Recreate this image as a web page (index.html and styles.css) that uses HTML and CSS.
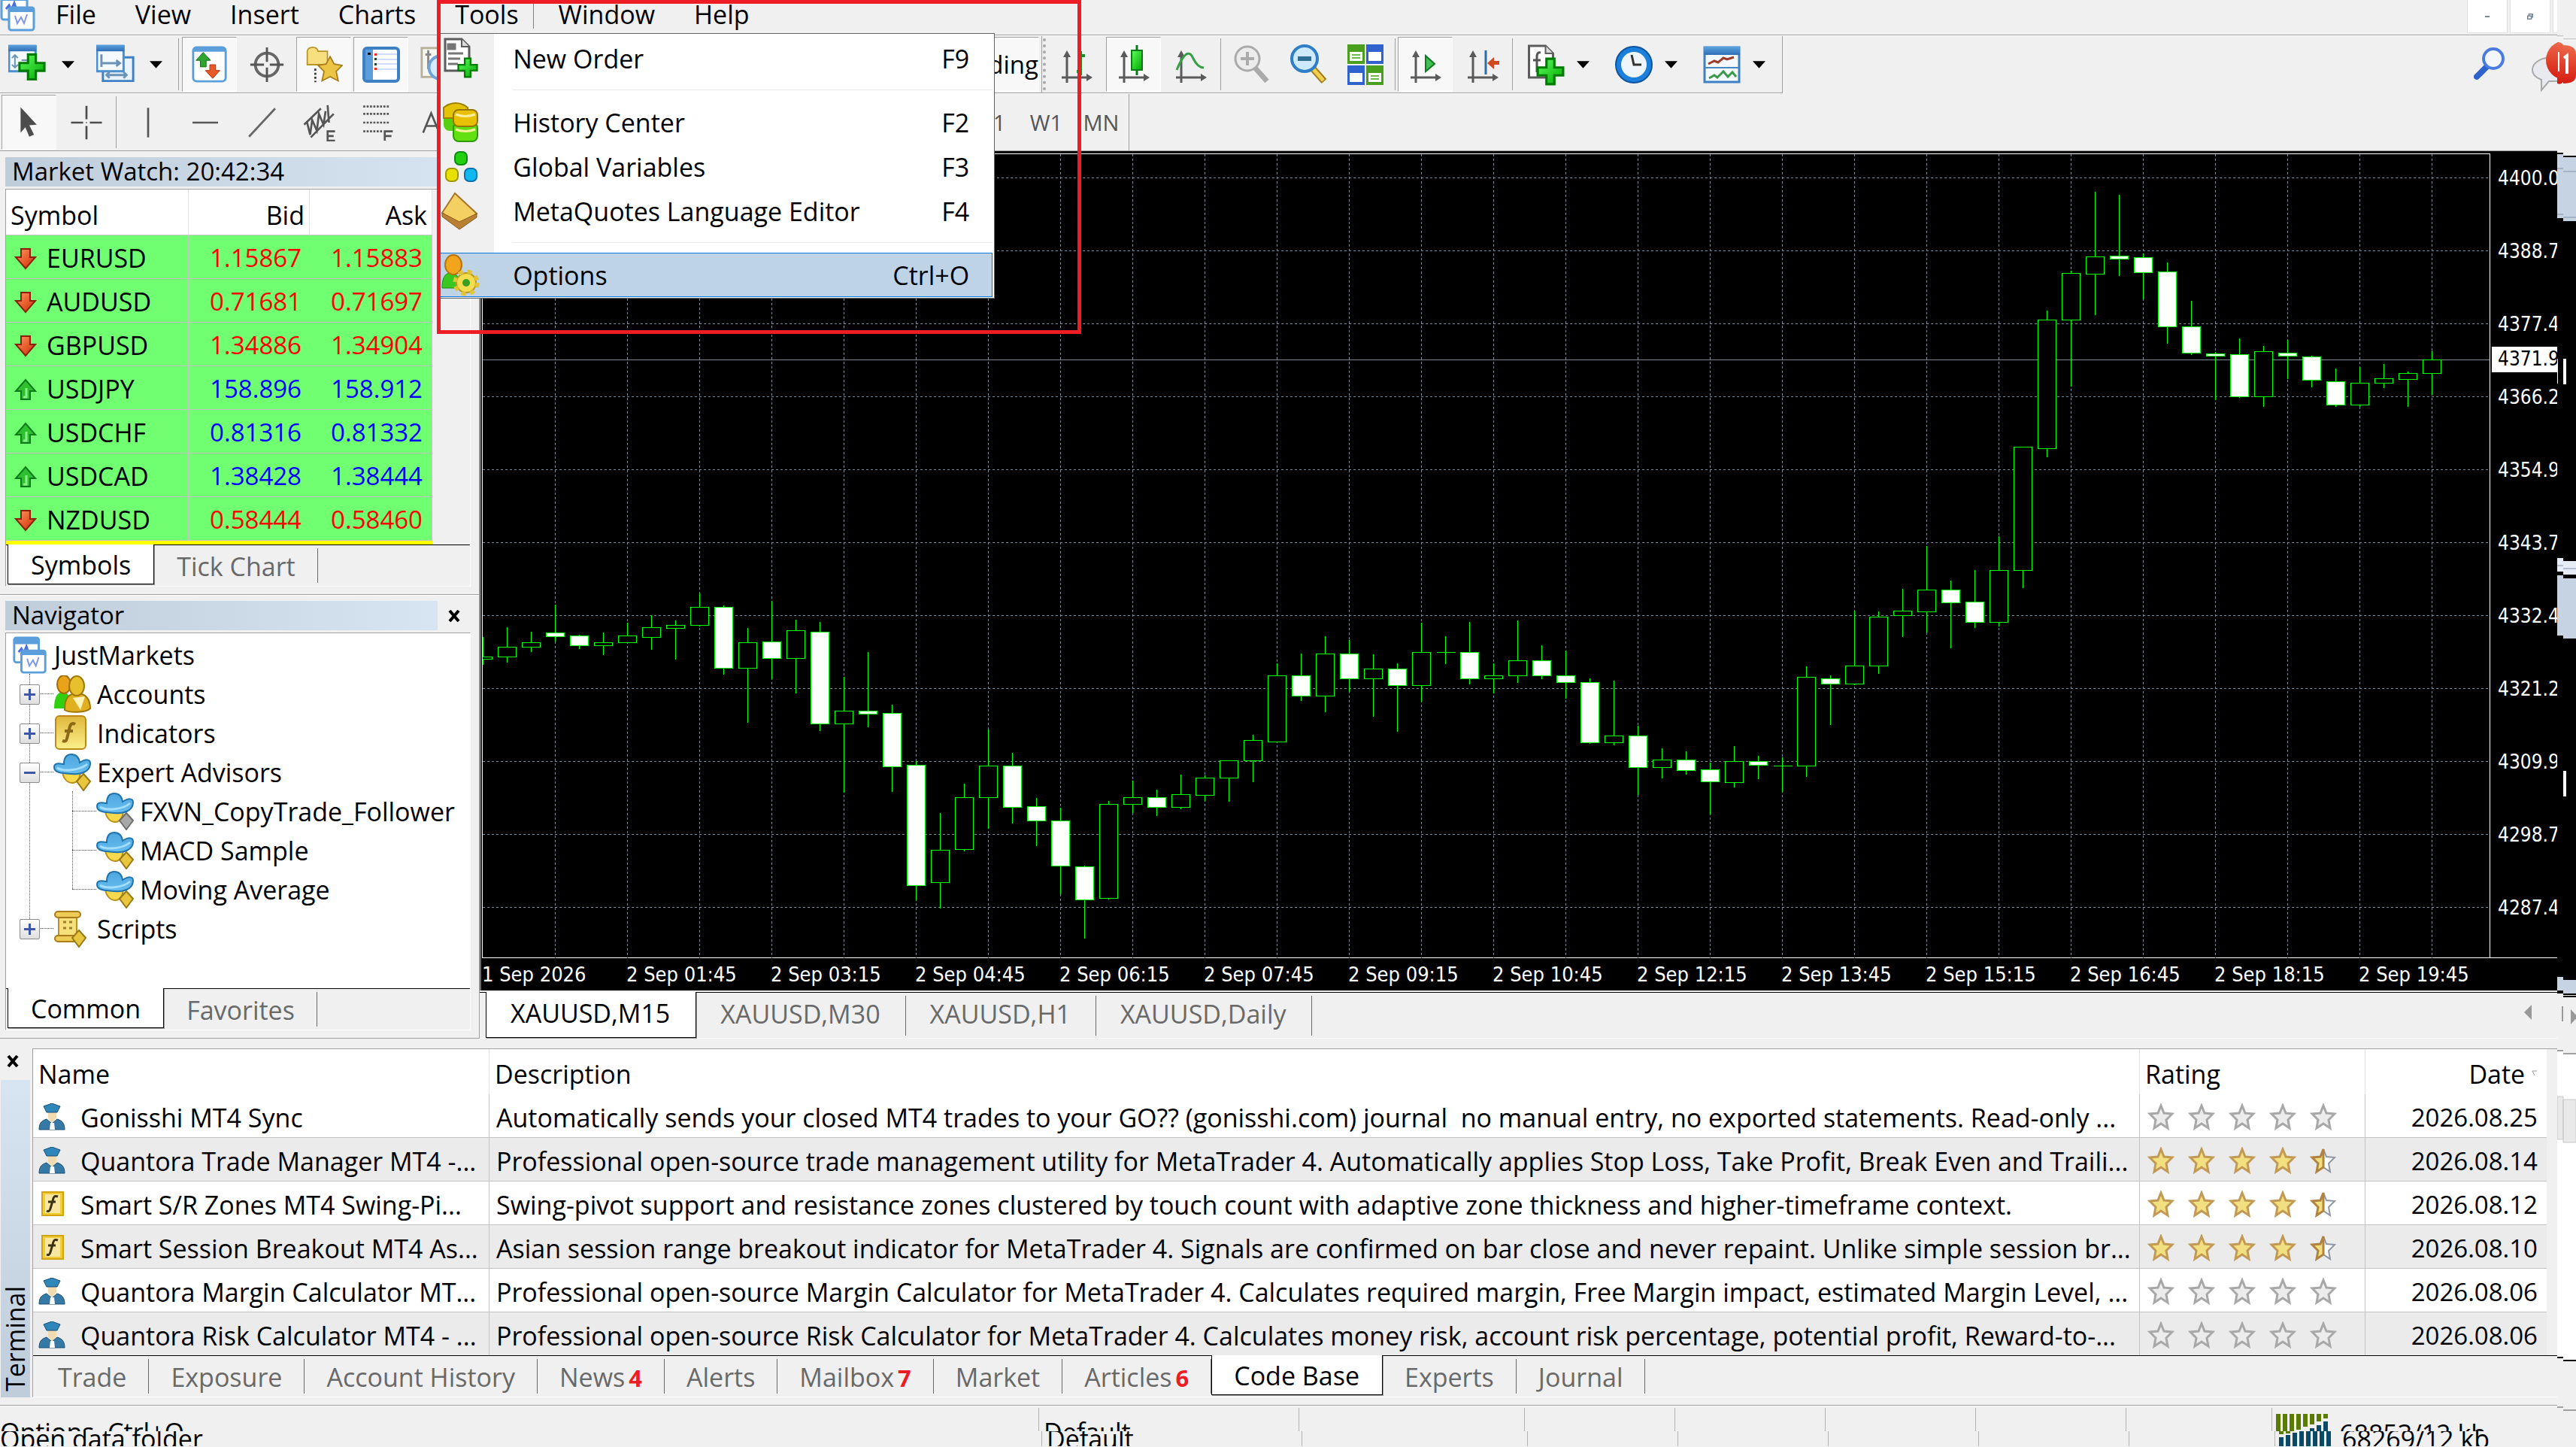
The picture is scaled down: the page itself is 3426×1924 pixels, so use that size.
FILE: index.html
```html
<!DOCTYPE html>
<html lang="en">
<head>
<meta charset="utf-8">
<title>JustMarkets - XAUUSD,M15</title>
<link rel="stylesheet" href="styles.css">
</head>
<body>
<svg class="defs" aria-hidden="true">
  <defs>
    <linearGradient id="gBlue" x2="0" y2="1"><stop offset="0" stop-color="#5ba3e0"/><stop offset="1" stop-color="#2f6fb5"/></linearGradient>
    <linearGradient id="gGreen" x2="1" y2="1"><stop offset="0" stop-color="#5dff5d"/><stop offset="1" stop-color="#00a800"/></linearGradient>
    <linearGradient id="gGold" x2="0" y2="1"><stop offset="0" stop-color="#e0b63a"/><stop offset="1" stop-color="#fbf08c"/></linearGradient>
    <linearGradient id="gRed" x2="1" y2="1"><stop offset="0" stop-color="#ff9a60"/><stop offset="1" stop-color="#d02800"/></linearGradient>
    <linearGradient id="gBadge" x2="0" y2="1"><stop offset="0" stop-color="#ee6a4c"/><stop offset="1" stop-color="#d41c10"/></linearGradient>
    <linearGradient id="gHat" x2="0" y2="1"><stop offset="0" stop-color="#4fa6de"/><stop offset="1" stop-color="#66bdf0"/></linearGradient>
    <symbol id="i-axes" viewBox="0 0 42 44"><path d="M8 44V8M1 37H38" stroke="#5a5a5a" stroke-width="3"/><path d="M3 10l5-9 5 9zM34 32l8 5-8 5z" fill="#5a5a5a"/></symbol>
    <symbol id="i-down" viewBox="0 0 32 32"><path d="M10 3h12v11h7L16 29 3 14h7z" fill="url(#gRed)" stroke="#8a2000" stroke-width="2"/></symbol>
    <symbol id="i-up" viewBox="0 0 32 32"><path d="M10 29h12V18h7L16 3 3 18h7z" fill="#2fc02f" stroke="#0b7a1b" stroke-width="2"/><path d="M13 26h4V14" fill="none" stroke="#8af08a" stroke-width="3"/></symbol>
    <symbol id="i-mt" viewBox="0 0 48 52"><rect x="2" y="2" width="34" height="34" rx="3" fill="#fff" stroke="#5a9edb" stroke-width="3"/><path d="M1 3h36v8H1z" fill="#5a9edb"/><path d="M8 22l4-5 3 6 4-9 3 9 4-3" fill="none" stroke="#4a6fe0" stroke-width="3"/><rect x="12" y="20" width="33" height="30" rx="3" fill="#fff" stroke="#5a9edb" stroke-width="3"/><path d="M11 20h35v6H11z" fill="#5a9edb"/><path d="M20 31l3 10 5-8 4 8 4-12" fill="none" stroke="#7f96ea" stroke-width="2"/></symbol>
    <symbol id="i-people" viewBox="0 0 50 50"><path d="M1 44c0-18 6-22 12-22s10 6 10 22z" fill="#30d010"/><ellipse cx="14" cy="12" rx="9" ry="12" fill="#e8a31a" stroke="#a06a00" stroke-width="2"/><path d="M15 46c0-17 6-22 17-22s17 8 17 20c-6 6-28 6-34 2z" fill="#e0b020" stroke="#a07400" stroke-width="2"/><ellipse cx="31" cy="14" rx="10" ry="13" fill="#e6c12c" stroke="#a07800" stroke-width="2"/><path d="M26 30l10 16 6-18z" fill="#fff3b8"/></symbol>
    <symbol id="i-fx" viewBox="0 0 50 50"><rect x="3" y="2" width="40" height="44" rx="5" fill="url(#gGold)" stroke="#b98a18" stroke-width="2"/><path d="M29 13c-5-3-7 1-8 7l-3 12c-1 4-3 4-6 3M15 22h11" fill="none" stroke="#8a6a1a" stroke-width="4"/></symbol>
    <symbol id="i-hat" viewBox="0 0 50 50"><path d="M12 22c0 10 6 17 13 17s11-7 11-16z" fill="#f6d94c" stroke="#b98f1a" stroke-width="2"/><path d="M14 14C14 5 18 1 24 1s10 4 11 11c8-5 14-5 14 1 0 11-12 15-25 14C9 26 1 25 1 18c0-6 6-5 13-4z" fill="url(#gHat)" stroke="#1f74ac" stroke-width="2"/><path d="M5 19c8 5 30 4 40-5" fill="none" stroke="#a5defc" stroke-width="3"/></symbol>
    <symbol id="i-tag" viewBox="0 0 20 24"><path d="M10 1l9 10-9 12L1 11z" fill="#e8c63e" stroke="#9a7a14" stroke-width="2"/></symbol>
    <symbol id="i-tagoff" viewBox="0 0 20 24"><path d="M10 1l9 10-9 12L1 11z" fill="#a8a8a8" stroke="#6e6e6e" stroke-width="2"/></symbol>
    <symbol id="i-scroll" viewBox="0 0 50 50"><path d="M7 8h24v32H7z" fill="#f6e07a" stroke="#b98f2a" stroke-width="2"/><rect x="2" y="2" width="34" height="8" rx="4" fill="#efcc58" stroke="#a87c1a" stroke-width="2"/><rect x="2" y="34" width="34" height="8" rx="4" fill="#efcc58" stroke="#a87c1a" stroke-width="2"/><path d="M13 16h4m4 0h4m-12 8h4m4 0h4" stroke="#a08030" stroke-width="3"/></symbol>
    <symbol id="i-ea" viewBox="0 0 36 36"><path d="M1 35c0-8 3-12 10-14l7 6 7-6c7 2 10 6 10 14z" fill="#3579a5" stroke="#1c4f74" stroke-width="1"/><path d="M13 10h11v10l-6 6-5-6z" fill="#f0dcb0"/><path d="M7 4l11-4 11 4-4 8H11z" fill="#2f86b8" stroke="#174f78"/><path d="M16 26h5l1 9h-7z" fill="#fff"/></symbol>
    <symbol id="i-fxs" viewBox="0 0 36 36"><rect x="5" y="2" width="28" height="31" fill="#f2cb35" stroke="#d1a412" stroke-width="2"/><path d="M9 5h20v25H9z" fill="#f8e7a0"/><path d="M26 8c-5-2-6 1-7 6l-3 10c-1 4-3 4-5 3M13 15h10" fill="none" stroke="#3a3210" stroke-width="3"/></symbol>
    <symbol id="i-star0" viewBox="0 0 36 36"><path d="M18 3l4 10 11 1-8 8 2 11-9-6-9 6 2-11-8-8 11-1z" fill="#ececec" stroke="#a8a8a8" stroke-width="3"/></symbol>
    <symbol id="i-star1" viewBox="0 0 36 36"><path d="M18 3l4 10 11 1-8 8 2 11-9-6-9 6 2-11-8-8 11-1z" fill="#f2e080" stroke="#c29a55" stroke-width="3"/></symbol>
    <symbol id="i-starh" viewBox="0 0 36 36"><path d="M18 3l4 10 11 1-8 8 2 11-9-6z" fill="#fff" stroke="#8d97a3" stroke-width="2"/><path d="M18 3v24l-9 6 2-11-8-8 11-1z" fill="#f2e080" stroke="#b08440" stroke-width="3"/></symbol>
    <symbol id="i-plus" viewBox="0 0 36 36"><path d="M13 2h10v11h11v10H23v11H13V23H2V13h11z" fill="url(#gGreen)" stroke="#007a00" stroke-width="3"/></symbol>
    <symbol id="i-caret" viewBox="0 0 18 10"><path d="M0 0h18L9 10z"/></symbol>
    <symbol id="i-page" viewBox="0 0 36 46"><path d="M2 2h22l10 10v32H2z" fill="#fff" stroke="#5c5c5c" stroke-width="3"/><path d="M24 2v10h10" fill="#ddd" stroke="#5c5c5c" stroke-width="2"/></symbol>
    <symbol id="i-x" viewBox="0 0 16 16"><path d="M2 1l12 14M14 1L2 15" stroke="#000" stroke-width="4"/></symbol>
  </defs>
</svg>

<div class="app">
  <nav class="menubar" aria-label="Main menu">
    <svg class="applogo" viewBox="0 10 48 42" aria-hidden="true"><use href="#i-mt" width="48" height="52"/></svg>
    <button>File</button><button>View</button><button>Insert</button><button>Charts</button>
    <div class="dropwrap">
      <button class="open" aria-expanded="true">Tools</button>
      <div class="drop" role="menu">
        <button role="menuitem"><svg viewBox="0 0 52 56"><use href="#i-page" x="3" width="36" height="46"/><path d="M9 9h9v6H9zM9 21h20M9 28h16M9 35h13" stroke="#777" stroke-width="3" fill="#777"/><use href="#i-plus" x="21" y="26" width="28" height="28"/></svg><span>New Order</span><kbd>F9</kbd></button>
        <hr>
        <button role="menuitem"><svg viewBox="0 0 52 56"><rect x="3" y="3" width="32" height="36" rx="8" fill="#55d010"/><path d="M3 8q16-12 32 0v14H3z" fill="#e4c400" stroke="#a08000" stroke-width="2"/><rect x="16" y="28" width="32" height="25" rx="7" fill="#62e012" stroke="#2e9a08" stroke-width="2"/><rect x="16" y="11" width="32" height="22" rx="7" fill="#e8c000" stroke="#987400" stroke-width="2"/><path d="M19 17q13 5 26 0M19 37q13 5 26 0" stroke="#fbf0a0" stroke-width="3" fill="none"/></svg><span>History Center</span><kbd>F2</kbd></button>
        <button role="menuitem"><svg viewBox="0 0 52 56"><rect x="18" y="8" width="16" height="17" rx="6" fill="#22d010" stroke="#0a8a10" stroke-width="2"/><rect x="6" y="30" width="16" height="17" rx="6" fill="#e8e000" stroke="#a09800" stroke-width="2"/><rect x="31" y="30" width="16" height="17" rx="6" fill="#10b8f0" stroke="#0a70b0" stroke-width="2"/></svg><span>Global Variables</span><kbd>F3</kbd></button>
        <button role="menuitem"><svg viewBox="0 0 52 56"><path d="M18 4l29 27-23 17L1 30z" fill="#f4cf62" stroke="#a8742a" stroke-width="2"/><path d="M1 30l23 12 23-11v5L24 52 1 35z" fill="#b98034" stroke="#8a5a20"/></svg><span>MetaQuotes Language Editor</span><kbd>F4</kbd></button>
        <hr>
        <button role="menuitem" class="hot"><svg viewBox="0 0 52 56"><path d="M1 45c0-16 5-20 12-20s12 6 12 20z" fill="#38c820" stroke="#1c8a10"/><ellipse cx="16" cy="14" rx="11" ry="13" fill="#f2a41c" stroke="#b47408" stroke-width="2"/><circle cx="33" cy="38" r="13" fill="#f2dc50" stroke="#b89a1c" stroke-width="2"/><circle cx="33" cy="38" r="15" fill="none" stroke="#e2c436" stroke-width="5" stroke-dasharray="6 6"/><circle cx="33" cy="38" r="5" fill="#38a020"/></svg><span>Options</span><kbd>Ctrl+O</kbd></button>
      </div>
      <div class="callout"></div>
    </div>
    <button>Window</button><button>Help</button>
    <div class="winbtns"><button aria-label="Minimize"><svg viewBox="0 0 8 4"><path d="M1 1h6v2H1z" fill="#778899"/></svg></button><button aria-label="Restore"><svg viewBox="0 0 10 10"><path d="M3 3V1h6v5H7M1 4h6v5H1z" fill="none" stroke="#778899" stroke-width="2"/></svg></button><button aria-label="Close"></button></div>
  </nav>

  <div class="toolbar">
    <div class="group g1">
      <button class="wide" aria-label="New chart"><svg viewBox="0 0 58 56"><path d="M1 3h36v34H1z" fill="#f4faff" stroke="#4a8fd0" stroke-width="3"/><path d="M0 1h38v9H0z" fill="url(#gBlue)"/><path d="M9 16v15M5 19l4-4 4 4M5 28l4 4 4-4M18 22h10" stroke="#6b93b8" stroke-width="2" fill="none"/><use href="#i-plus" x="13" y="12" width="38" height="38"/></svg><svg class="caret"><use href="#i-caret"/></svg></button>
      <button class="wide" aria-label="Profiles"><svg viewBox="0 0 58 56"><path d="M9 18h41v32H9z" fill="#e8f3fd" stroke="#3f80c4" stroke-width="3"/><path d="M1 3h36v34H1z" fill="#f4faff" stroke="#4a8fd0" stroke-width="3"/><path d="M0 1h38v9H0z" fill="url(#gBlue)"/><path d="M7 14v17M7 26h24M27 22l5 4-5 4M14 42h26M18 38l-4 4 4 4M37 38l4 4-4 4" stroke="#6b93b8" stroke-width="3" fill="none"/></svg><svg class="caret"><use href="#i-caret"/></svg></button>
      <i class="sep"></i>
      <button class="on" aria-label="Market Watch"><svg viewBox="0 0 50 52"><rect x="2" y="2" width="45" height="47" rx="5" fill="#fff" stroke="#5a9edb" stroke-width="3"/><path d="M1 8q0-7 6-7h35q6 0 6 7z" fill="#5a9edb"/><path d="M16 9l10 11h-6v9h-8v-9H6z" fill="#2ea32e" stroke="#11701a"/><path d="M29 45l10-11h-6v-8h-8v8h-6z" fill="#e8592a" stroke="#b03410"/></svg></button>
      <button aria-label="Data Window"><svg viewBox="0 0 50 52"><circle cx="25" cy="26" r="16" fill="none" stroke="#666" stroke-width="4"/><path d="M25 2v20M25 30v20M2 26h19M29 26h19" stroke="#555" stroke-width="3"/></svg></button>
      <button class="on" aria-label="Navigator"><svg viewBox="0 0 54 56"><path d="M2 8q1-6 8-6t8 6h14v20H2z" fill="#f7df80" stroke="#b8942a" stroke-width="2"/><path d="M14 34v20" stroke="#333" stroke-width="3" stroke-dasharray="3 3"/><path d="M36 16l6 11 12 2-9 9 3 14-12-6-12 6 3-14-9-9 12-2z" fill="#edc544" stroke="#a97d18" stroke-width="2"/></svg></button>
      <button class="on" aria-label="Terminal"><svg viewBox="0 0 50 50"><rect x="2" y="3" width="46" height="44" rx="4" fill="#fff" stroke="#3f80c4" stroke-width="4"/><path d="M4 5h10v40H4z" fill="#5c9ddb"/><path d="M18 11h28M18 18h28M18 24h28M18 31h28" stroke="#cfdcff" stroke-width="2"/><path d="M7 9h4v3H7z"/><path d="M16 10h3v3h-3zM16 29h3v3h-3z" fill="#f22"/><path d="M16 16h3v3h-3zM16 23h3v3h-3z" fill="#243"/></svg></button>
      <button aria-label="Strategy Tester"><svg viewBox="0 0 50 52"><rect x="2" y="3" width="40" height="40" fill="#f7f7f2" stroke="#b9b09c" stroke-width="3"/><path d="M11 6v26M7 12h8" stroke="#888" stroke-width="3"/><circle cx="28" cy="30" r="16" fill="#d6e9fa" stroke="#6ea2d8" stroke-width="4"/></svg></button>
      <button class="on auto">AutoTrading</button>
    </div>
    <div class="group g2">
      <i class="grip"></i>
      <button aria-label="Bar Chart"><svg viewBox="0 0 50 56"><use href="#i-axes" x="4" y="8" width="42" height="44"/><path d="M30 10v32M30 16h6M25 37h5" stroke="#1d8a2c" stroke-width="4"/></svg></button>
      <button class="on" aria-label="Candlesticks"><svg viewBox="0 0 50 56"><use href="#i-axes" x="4" y="8" width="42" height="44"/><path d="M29 2v40" stroke="#0a7a1a" stroke-width="3"/><rect x="22" y="9" width="14" height="26" fill="url(#gGreen)" stroke="#0a7a1a" stroke-width="2"/></svg></button>
      <button aria-label="Line Chart"><svg viewBox="0 0 50 56"><use href="#i-axes" x="4" y="8" width="42" height="44"/><path d="M6 35q14-34 22-15 6 12 14 12" fill="none" stroke="#35a045" stroke-width="3"/></svg></button>
      <i class="sep"></i>
      <button aria-label="Zoom In"><svg viewBox="0 0 50 56"><path d="M30 32l16 18" stroke="#aaa" stroke-width="7"/><circle cx="20" cy="20" r="16" fill="#ececec" stroke="#aaa" stroke-width="3"/><path d="M20 11v18M11 20h18" stroke="#aaa" stroke-width="4"/></svg></button>
      <button aria-label="Zoom Out"><svg viewBox="0 0 50 56"><path d="M30 32l16 18" stroke="#a07c10" stroke-width="9"/><path d="M30 32l15 17" stroke="#f0d050" stroke-width="5"/><circle cx="20" cy="20" r="17" fill="#cfeafc" stroke="#2f7fc8" stroke-width="4"/><path d="M11 20h18" stroke="#2f6c96" stroke-width="6"/></svg></button>
      <button aria-label="Tile Windows"><svg viewBox="0 0 50 56"><path d="M1 1h23v26H1zM26 29h23v26H26z" fill="#4aa01c"/><path d="M26 1h23v26H26zM1 29h23v26H1z" fill="#2f62cc"/><path d="M4 11h17v12H4zM29 11h17v12H29zM4 39h17v12H4zM29 39h17v12H29z" fill="#fff"/><path d="M7 15h11M7 19h11M32 43h11M32 47h11" stroke="#6cb848" stroke-width="2"/></svg></button>
      <i class="sep"></i>
      <button class="on" aria-label="Auto Scroll"><svg viewBox="0 0 50 56"><use href="#i-axes" x="4" y="8" width="42" height="44"/><path d="M25 16v21l12-10z" fill="#3fc052" stroke="#0f7a22" stroke-width="2"/></svg></button>
      <button aria-label="Chart Shift"><svg viewBox="0 0 50 56"><use href="#i-axes" x="4" y="8" width="42" height="44"/><path d="M29 9v32" stroke="#2a6f9e" stroke-width="3"/><path d="M31 26l9-8v5h7v5h-7v6z" fill="#d0481c"/></svg></button>
      <i class="sep"></i>
      <button class="drp" aria-label="Indicators"><svg viewBox="0 0 50 56"><use href="#i-page" x="0" y="1" width="37" height="46"/><path d="M18 12c-4-1-5 2-5 6v20M8 22h10" stroke="#555" stroke-width="3" fill="none"/><use href="#i-plus" x="12" y="18" width="38" height="38"/></svg><svg class="caret"><use href="#i-caret"/></svg></button>
      <button class="drp" aria-label="Periods"><svg viewBox="0 0 50 56"><circle cx="25" cy="28" r="24" fill="#1b7fdc" stroke="#0d559e" stroke-width="2"/><circle cx="25" cy="28" r="17" fill="#eef6fc"/><path d="M22 15l3 13h10" fill="none" stroke="#333" stroke-width="3"/></svg><svg class="caret"><use href="#i-caret"/></svg></button>
      <button class="drp" aria-label="Templates"><svg viewBox="0 0 50 56"><rect x="2" y="5" width="46" height="46" fill="#f4f9fd" stroke="#3f80c4" stroke-width="3"/><path d="M1 4h48v11H1z" fill="url(#gBlue)"/><path d="M2 32h46" stroke="#4a86bf" stroke-width="2"/><path d="M7 27l8-4 5 2 7-6 5 2 9-3" fill="none" stroke="#a03a2a" stroke-width="3"/><path d="M8 46l7-4 4 3 8-8 6 7 6-6 5 6" fill="none" stroke="#3a9a4a" stroke-width="3"/></svg><svg class="caret"><use href="#i-caret"/></svg></button>
    </div>
    <div class="tray">
      <button aria-label="Search"><svg viewBox="0 0 42 44"><path d="M4 39l14-14" stroke="#2f62cc" stroke-width="8" stroke-linecap="round"/><circle cx="26" cy="15" r="13" fill="#f3f6fc" stroke="#4a7be0" stroke-width="4"/></svg></button>
      <button class="chat" aria-label="Chat"><svg viewBox="0 0 60 76"><path d="M2 46c0-10 12-17 28-17s28 7 28 17-14 16-34 15l-10 12V59C6 56 2 52 2 46z" fill="#e9e9f0" stroke="#a8a8a8" stroke-width="2"/><circle cx="46" cy="33" r="26" fill="url(#gBadge)"/></svg></button>
    </div>
  </div>

  <div class="toolbar tb2">
    <div class="group g3">
      <button class="on" aria-label="Cursor"><svg viewBox="0 0 50 56"><path d="M12 5l24 26-11 1 7 14-7 3-6-14-7 8z" fill="#4c4c4c"/></svg></button>
      <button aria-label="Crosshair"><svg viewBox="0 0 50 56"><path d="M25 3v20M25 33v20M2 28h18M30 28h18" stroke="#4c4c4c" stroke-width="3"/><path d="M24 27h2v2h-2z" fill="#888"/></svg></button>
      <i class="sep"></i>
      <button class="draw" aria-label="Vertical Line"><svg viewBox="0 0 50 56"><path d="M25 6v44" stroke="#555" stroke-width="3"/></svg></button>
      <button class="draw" aria-label="Horizontal Line"><svg viewBox="0 0 50 56"><path d="M6 28h38" stroke="#555" stroke-width="3"/></svg></button>
      <button class="draw" aria-label="Trendline"><svg viewBox="0 0 50 56"><path d="M5 49L44 7" stroke="#666" stroke-width="3"/></svg></button>
      <button class="draw" aria-label="Equidistant Channel"><svg viewBox="0 0 50 56"><path d="M2 31L27 7M12 50L46 15M6 26l5 20 3-22 7 16 3-25 7 16 3-20M37 2l2 26" stroke="#555" stroke-width="3" fill="none"/><path d="M48 41H37v14h11M37 48h9" stroke="#555" stroke-width="3" fill="none"/></svg></button>
      <button class="draw" aria-label="Fibonacci Retracement"><svg viewBox="0 0 50 56"><path d="M5 4h40M5 15h40M5 28h40M5 41h28" stroke="#555" stroke-width="3" stroke-dasharray="3 2"/><path d="M49 41H37v14M37 48h10" stroke="#555" stroke-width="3" fill="none"/></svg></button>
      <button class="draw" aria-label="Text"><svg viewBox="0 0 50 56"><path d="M9 43L21 14l12 29M14 33h14" stroke="#555" stroke-width="3" fill="none"/></svg></button>
      <span class="fill"></span>
      <button class="tf">D1</button><button class="tf">W1</button><button class="tf">MN</button>
    </div>
  </div>

  <div class="workspace">
    <div class="side">
      <section class="panel" aria-label="Market Watch">
        <header class="title"><h2>Market Watch: 20:42:34</h2></header>
        <div class="box">
          <table class="quotes">
            <thead><tr><th>Symbol</th><th>Bid</th><th>Ask</th></tr></thead>
            <tbody>
              <tr><td><svg><use href="#i-down"/></svg>EURUSD</td><td>1.15867</td><td>1.15883</td></tr>
              <tr><td><svg><use href="#i-down"/></svg>AUDUSD</td><td>0.71681</td><td>0.71697</td></tr>
              <tr><td><svg><use href="#i-down"/></svg>GBPUSD</td><td>1.34886</td><td>1.34904</td></tr>
              <tr class="up"><td><svg><use href="#i-up"/></svg>USDJPY</td><td>158.896</td><td>158.912</td></tr>
              <tr class="up"><td><svg><use href="#i-up"/></svg>USDCHF</td><td>0.81316</td><td>0.81332</td></tr>
              <tr class="up"><td><svg><use href="#i-up"/></svg>USDCAD</td><td>1.38428</td><td>1.38444</td></tr>
              <tr><td><svg><use href="#i-down"/></svg>NZDUSD</td><td>0.58444</td><td>0.58460</td></tr>
            </tbody>
          </table>
          <div class="nextrow"></div>
          <div class="tabs"><button class="sel">Symbols</button><button>Tick Chart</button></div>
        </div>
      </section>
      <section class="panel" aria-label="Navigator">
        <header class="title"><h2>Navigator</h2><button class="close" aria-label="Close"><svg><use href="#i-x"/></svg></button></header>
        <div class="box">
          <div class="tree">
            <div class="node"><svg><use href="#i-mt"/></svg>JustMarkets</div>
            <ul>
              <li><div class="node"><button class="exp" aria-label="Expand"></button><svg><use href="#i-people"/></svg>Accounts</div></li>
              <li><div class="node"><button class="exp" aria-label="Expand"></button><svg><use href="#i-fx"/></svg>Indicators</div></li>
              <li><div class="node"><button class="exp less" aria-label="Collapse"></button><svg viewBox="0 0 50 50"><use href="#i-hat" width="50" height="50"/><use href="#i-tag" x="30" y="26" width="20" height="24"/></svg>Expert Advisors</div>
                <ul>
                  <li><div class="node"><svg viewBox="0 0 50 50"><use href="#i-hat" width="50" height="50"/><use href="#i-tagoff" x="30" y="26" width="20" height="24"/></svg>FXVN_CopyTrade_Follower</div></li>
                  <li><div class="node"><svg viewBox="0 0 50 50"><use href="#i-hat" width="50" height="50"/><use href="#i-tag" x="30" y="26" width="20" height="24"/></svg>MACD Sample</div></li>
                  <li><div class="node"><svg viewBox="0 0 50 50"><use href="#i-hat" width="50" height="50"/><use href="#i-tag" x="30" y="26" width="20" height="24"/></svg>Moving Average</div></li>
                </ul></li>
              <li><div class="node"><button class="exp" aria-label="Expand"></button><svg viewBox="0 0 50 50"><use href="#i-scroll" width="50" height="50"/><use href="#i-tag" x="24" y="26" width="20" height="24"/></svg>Scripts</div></li>
            </ul>
          </div>
          <div class="tabs"><button class="sel">Common</button><button>Favorites</button></div>
        </div>
      </section>
    </div>

    <main class="chart">
      <div class="frame">
        <div class="plotrow">
          <svg class="plot" id="plot" role="img" aria-label="XAUUSD M15 candlestick chart"></svg>
          <div class="prices">
            <span>4400.0</span><span>4388.7</span><span>4377.4</span><span>4366.2</span><span>4354.9</span><span>4343.7</span><span>4332.4</span><span>4321.2</span><span>4309.9</span><span>4298.7</span><span>4287.4</span>
            <b>4371.9</b>
          </div>
        </div>
        <div class="times">
          <span>1 Sep 2026</span><span>2 Sep 01:45</span><span>2 Sep 03:15</span><span>2 Sep 04:45</span><span>2 Sep 06:15</span><span>2 Sep 07:45</span><span>2 Sep 09:15</span><span>2 Sep 10:45</span><span>2 Sep 12:15</span><span>2 Sep 13:45</span><span>2 Sep 15:15</span><span>2 Sep 16:45</span><span>2 Sep 18:15</span><span>2 Sep 19:45</span>
        </div>
      </div>
      <div class="tabs"><button class="sel">XAUUSD,M15</button><button>XAUUSD,M30</button><button>XAUUSD,H1</button><button>XAUUSD,Daily</button><button class="scroll" aria-label="Scroll tabs left"><svg viewBox="0 0 10 20"><path d="M10 0v20L0 10z" fill="#999"/></svg></button></div>
    </main>
  </div>

  <section class="terminal" aria-label="Terminal">
    <div class="rail"><button class="close" aria-label="Close"><svg><use href="#i-x"/></svg></button><h2>Terminal</h2></div>
    <div class="box">
      <table class="codebase">
        <thead><tr><th>Name</th><th>Description</th><th>Rating</th><th>Date <svg viewBox="0 0 8 8"><path d="M1 1h6M1 1l3 6" stroke="#999" fill="none"/></svg></th></tr></thead>
        <tbody>
          <tr><td><svg><use href="#i-ea"/></svg>Gonisshi MT4 Sync</td><td>Automatically sends your closed MT4 trades to your GO?? (gonisshi.com) journal &nbsp;no manual entry, no exported statements. Read-only ...</td><td><svg><use href="#i-star0"/></svg><svg><use href="#i-star0"/></svg><svg><use href="#i-star0"/></svg><svg><use href="#i-star0"/></svg><svg><use href="#i-star0"/></svg></td><td>2026.08.25</td></tr>
          <tr><td><svg><use href="#i-ea"/></svg>Quantora Trade Manager MT4 -...</td><td>Professional open-source trade management utility for MetaTrader 4. Automatically applies Stop Loss, Take Profit, Break Even and Traili...</td><td><svg><use href="#i-star1"/></svg><svg><use href="#i-star1"/></svg><svg><use href="#i-star1"/></svg><svg><use href="#i-star1"/></svg><svg><use href="#i-starh"/></svg></td><td>2026.08.14</td></tr>
          <tr><td><svg><use href="#i-fxs"/></svg>Smart S/R Zones MT4 Swing-Pi...</td><td>Swing-pivot support and resistance zones clustered by touch count with adaptive zone thickness and higher-timeframe context.</td><td><svg><use href="#i-star1"/></svg><svg><use href="#i-star1"/></svg><svg><use href="#i-star1"/></svg><svg><use href="#i-star1"/></svg><svg><use href="#i-starh"/></svg></td><td>2026.08.12</td></tr>
          <tr><td><svg><use href="#i-fxs"/></svg>Smart Session Breakout MT4 As...</td><td>Asian session range breakout indicator for MetaTrader 4. Signals are confirmed on bar close and never repaint. Unlike simple session br...</td><td><svg><use href="#i-star1"/></svg><svg><use href="#i-star1"/></svg><svg><use href="#i-star1"/></svg><svg><use href="#i-star1"/></svg><svg><use href="#i-starh"/></svg></td><td>2026.08.10</td></tr>
          <tr><td><svg><use href="#i-ea"/></svg>Quantora Margin Calculator MT...</td><td>Professional open-source Margin Calculator for MetaTrader 4. Calculates required margin, Free Margin impact, estimated Margin Level, ...</td><td><svg><use href="#i-star0"/></svg><svg><use href="#i-star0"/></svg><svg><use href="#i-star0"/></svg><svg><use href="#i-star0"/></svg><svg><use href="#i-star0"/></svg></td><td>2026.08.06</td></tr>
          <tr><td><svg><use href="#i-ea"/></svg>Quantora Risk Calculator MT4 - ...</td><td>Professional open-source Risk Calculator for MetaTrader 4. Calculates money risk, account risk percentage, potential profit, Reward-to-...</td><td><svg><use href="#i-star0"/></svg><svg><use href="#i-star0"/></svg><svg><use href="#i-star0"/></svg><svg><use href="#i-star0"/></svg><svg><use href="#i-star0"/></svg></td><td>2026.08.06</td></tr>
        </tbody>
      </table>
      <div class="tabs"><button>Trade</button><button>Exposure</button><button>Account History</button><button>News<b>4</b></button><button>Alerts</button><button>Mailbox<b>7</b></button><button>Market</button><button>Articles<b>6</b></button><button class="sel">Code Base</button><button>Experts</button><button>Journal</button></div>
    </div>
  </section>

  <footer class="status">
    <div class="line first"><span>Options &nbsp;Ctrl+O</span><span>Default</span><span></span><span></span><span></span><span></span><span></span><span></span><span class="net"><svg viewBox="0 0 70 30"><path d="M3 0v26M12 0v26M21 0v23M30 0v21M39 0v17M48 0v14M57 0v10M66 0v6" stroke="#5a7a00" stroke-width="6"/><path d="M21 28v4M30 26v6M39 23v9M48 19v13M57 15v17M66 10v22" stroke="#0b4a66" stroke-width="6"/></svg>68853/12 kb</span></div>
    <div class="line second"><span>Open data folder</span><span>Default</span><span></span><span></span><span></span><span></span><span></span><span></span><span class="net"><svg viewBox="0 0 70 20"><path d="M3 0v4M12 0v3" stroke="#5a7a00" stroke-width="6"/><path d="M3 8v12M12 5v15M21 2v18M30 0v20M39 0v20M48 0v20M57 0v20M66 0v20" stroke="#0b4a66" stroke-width="6"/></svg>68269/12 kb</span></div>
  </footer>

  <svg class="edge" aria-hidden="true">
    <rect width="25" height="100%" fill="#f0f0f0"/>
    <path d="M0 48h8M8 52h17" stroke="#a0a0a0"/><path d="M0 49h8M8 53h17" stroke="#fff"/>
    <path d="M0 56q6 0 8 4v49q-3 4-8 2z" fill="url(#gBadge)"/>
    <path d="M8 60q17 0 17 12v28q0 11-17 11z" fill="url(#gBadge)"/>
    <path d="M2 69v26" stroke="#fff" stroke-width="2"/><path d="M13 98V74l-4 3" fill="none" stroke="#fff" stroke-width="4"/>
    <path d="M0 203h8v1116H0zM8 207h17v1116H8z" fill="#000"/>
    <path d="M0 205h8v85H0zM8 209h17v85H8zM0 765h8v80H0zM8 769h17v80H8zM0 1299h8v18H0zM8 1303h17v18H8z" fill="#c5d3e3"/>
    <path d="M0 742h8v18H0zM8 746h17v18H8z" fill="#e6edf6"/>
    <path d="M0 224h8M8 228h17M0 285h8M8 289h17M0 752h8M8 756h17" stroke="#8093ad" stroke-width="1"/>
    <path d="M0 477h1v33H0zM8 477h4v34H8zM8 1025h4v34H8z" fill="#fff"/>
    <path d="M0 1320h8M8 1325h17" stroke="#000" stroke-width="2"/>
    <path d="M7 1338v20" stroke="#999" stroke-width="2"/><path d="M18 1342v20l9-10z" fill="#999"/>
    <path d="M0 1398h8v408H0zM8 1402h17v408H8z" fill="#fff"/>
    <path d="M0 1458h8v57H0zM8 1462h17v57H8z" fill="#e9e9e9" stroke="#c8c8c8"/>
    <path d="M0 1805h8M8 1809h17" stroke="#000" stroke-width="2"/>
    <path d="M0 1397h8M8 1401h17M0 1871h8M8 1875h17" stroke="#a0a0a0" stroke-width="2"/>
  </svg>
</div>
<script src="chart.js"></script>
</body>
</html>
```

FILE: styles.css
```css
* { box-sizing: border-box; }

:root {
  --face: #f0f0f0;
  --line: #a0a0a0;
  --cell: #c4c4c4;
  --text: 34px;
  --num: 33px;
}

body {
  margin: 0;
  background: var(--face);
  color: #000;
  font: var(--text)/40px "Open Sans", "Noto Sans", sans-serif;
  white-space: nowrap;
}

button {
  margin: 0;
  padding: 0;
  border: 0;
  background: none;
  color: inherit;
  font: inherit;
  display: flex;
  align-items: center;
  flex: none;
}

h2 { margin: 0; font: inherit; }
svg { flex: none; display: block; }
table { border-collapse: separate; border-spacing: 0; table-layout: fixed; }
th { font-weight: 400; text-align: left; }
.defs { position: absolute; width: 0; height: 0; }
.app { position: relative; overflow: hidden; min-height: 100vh; }

/* Menu bar */
.menubar {
  display: flex;
  height: 48px;
  border-bottom: 1px solid #fff;
  box-shadow: inset 0 -1px var(--line);
}
.menubar > button, .open { height: 38px; padding: 0 26px; }
.applogo { width: 48px; height: 42px; }
.dropwrap { position: relative; z-index: 5; }
.open {
  padding-right: 19px;
  margin-right: 7px;
  border-right: 1px solid #808080;
}
.drop {
  position: absolute;
  left: 6px;
  top: 44px;
  width: 738px;
  padding: 3px 2px 1px 0;
  border: 1px solid #646464;
  border-left: 0;
  background: linear-gradient(90deg, var(--face) 72px, #fff 72px);
}
.drop button {
  width: 100%;
  height: 59px;
  padding: 0 30px 0 1px;
  border: 1px solid transparent;
}
.drop svg { width: 52px; height: 56px; }
.drop span { margin-left: 43px; flex: 1; text-align: left; }
.drop kbd { font: inherit; }
.drop hr { margin: 12px 0 13px 96px; border: 0; border-top: 1px solid #e8e8e8; }
.drop .hot { background: #bed3e5; border-color: #0078d7; }
.callout {
  position: absolute;
  left: 2px;
  top: 0;
  width: 857px;
  height: 444px;
  border: 5px solid #ee1c25;
  pointer-events: none;
}
.winbtns { display: flex; gap: 3px; margin-left: auto; margin-right: -23px; }
.winbtns button {
  width: 54px;
  height: 44px;
  background: #fff;
  border: 1px solid #e2e2e2;
  border-top: 0;
  justify-content: center;
}
.winbtns svg { width: 8px; height: 8px; }

/* Toolbars */
.toolbar { display: flex; height: 77px; }
.group {
  display: flex;
  align-items: center;
  border-bottom: 1px solid var(--line);
  border-right: 1px solid var(--line);
  height: 76px;
  box-shadow: 0 1px #fff;
}
.toolbar button { width: 73px; height: 73px; justify-content: center; margin-right: 3px; }
.toolbar button > svg { width: 50px; height: 50px; }
.toolbar .on {
  border: 1px solid var(--line);
  border-right-color: #fff;
  border-bottom-color: #fff;
  background: #f8f8f8;
}
.toolbar button > .caret { width: 17px; height: 10px; margin-left: 16px; }
.sep { width: 1px; height: 69px; background: var(--line); margin-right: 4px; }
.g1 { width: 1386px; }
.toolbar .wide { width: 114px; padding-left: 11px; justify-content: flex-start; }
.toolbar .wide > svg:first-child { width: 57px; height: 56px; }
.toolbar .wide > .caret { margin-left: 14px; }
.g1 > .sep { margin-left: 3px; }
.toolbar .auto { margin-left: auto; width: 260px; justify-content: flex-end; font-size: var(--num); }
.g2 { width: 985px; }
.grip { width: 4px; height: 69px; margin: 0 4px 0 1px; border-left: 4px dotted #a8a8a8; }
.g2 .sep { margin-left: 0; margin-right: 3px; }
.g2 button > svg:first-child { height: 56px; }
.toolbar .drp { width: 114px; }
.tray { margin-left: auto; display: flex; gap: 34px; }
.tray button { width: 42px; margin: 0; }
.toolbar .tray .chat { width: 60px; }
.toolbar .tray svg { width: 42px; height: 44px; }
.toolbar .tray .chat svg { width: 60px; height: 76px; }
.tb2 { height: 76px; border-bottom: 1px solid var(--line); }
.g3 { width: 1502px; height: 75px; border-bottom: 0; box-shadow: none; padding-left: 2px; }
.toolbar .draw { width: 76px; margin: 0; }
.fill { flex: 1; }
.toolbar .tf { margin: 0; color: #555; font-size: 29px; }

/* Side panels */
.workspace { display: flex; align-items: stretch; }
.side { width: 637px; flex: none; }
.panel { padding: 8px 11px 10px 7px; border-bottom: 1px solid var(--line); }
.panel:first-child { box-shadow: 0 1px #fff; }
.panel + .panel .box { min-height: 529px; }
.title { display: flex; height: 39px; margin-bottom: 3px; }
.title h2 {
  flex: 1;
  padding-left: 9px;
  font-size: var(--num);
  line-height: 38px;
  background: linear-gradient(90deg, #bfcddb, #d7e4f2);
}
.close { width: 44px; justify-content: center; }
.close svg { width: 16px; height: 16px; }
.box { border: 1px solid var(--line); border-right-color: #fff; border-bottom-color: #fff; background: var(--face); }

.quotes { width: 567px; }
.quotes th:first-child { width: 243px; }
.quotes th { height: 61px; padding: 7px 6px 0; background: #fff; border-right: 1px solid #e4e4e4; border-bottom: 1px solid var(--cell); }
.quotes th:nth-child(2) { width: 161px; }
.quotes th + th, .quotes td + td { text-align: right; }
.quotes td {
  height: 58px;
  padding: 3px 10px 0 12px;
  background: #70ff70;
  border-right: 1px solid var(--cell);
  border-bottom: 1px solid var(--cell);
  color: #f00;
  font-size: var(--num);
}
.quotes td:last-child { padding-right: 12px; }
.quotes td:first-child { color: #000; padding-left: 10px; font-size: var(--text); }
.quotes .up td + td { color: #00f; }
.quotes td svg { display: inline-block; width: 32px; height: 32px; vertical-align: -4px; margin-right: 12px; }
.nextrow { width: 567px; height: 5px; background: #ff0; }

.tabs { display: flex; border-top: 1px solid #000; height: 55px; color: #696969; background: var(--face); }
.tabs button { position: relative; padding: 2px 30px 0; height: 53px; }
.tabs button:not(.sel)::after {
  content: "";
  position: absolute;
  right: 0;
  top: 4px;
  bottom: 3px;
  border-right: 1px solid #696969;
}
.tabs .sel {
  margin-top: -1px;
  background: #fff;
  color: #000;
  border: 1px solid #000;
  border-top: 0;
  box-shadow: 1px 1px #999;
}
.side .tabs .sel { margin-left: 2px; }
.tabs b { color: #ee1c25; font-size: 31px; margin-left: 5px; padding-top: 3px; }

.tree { background: #fff; padding-top: 2px; height: 472px; }
.tree ul { list-style: none; margin: 0; padding: 0; position: relative; }
.node { display: flex; align-items: center; height: 52px; padding-left: 8px; padding-top: 2px; position: relative; }
.node > svg { width: 50px; height: 50px; margin-right: 8px; }
.tree > .node > svg { width: 48px; height: 50px; }
.tree > ul > li > .node { padding-left: 18px; }
.tree > ul > li > .node > svg { margin-left: 18px; }
.tree ul ul .node { padding-left: 120px; }
.tree > ul::before, .tree ul ul::before {
  content: "";
  position: absolute;
  left: 31px;
  top: 0;
  height: 338px;
  border-left: 1px dotted #555;
}
.tree ul ul::before { left: 88px; height: 130px; }
.tree li > .node::before {
  content: "";
  position: absolute;
  left: 31px;
  top: 26px;
  width: 32px;
  border-top: 1px dotted #555;
}
.tree ul ul li > .node::before { left: 88px; }
.exp {
  position: relative;
  width: 27px;
  height: 27px;
  border: 1px solid #8c8c8c;
  border-radius: 2px;
  background: linear-gradient(90deg, #3b57a6, #3b57a6) center/15px 3px no-repeat,
    linear-gradient(#3b57a6, #3b57a6) center/3px 15px no-repeat,
    linear-gradient(#fff, #dedede);
}
.less { background: linear-gradient(#3b57a6, #3b57a6) center/15px 3px no-repeat, linear-gradient(#fff, #dedede); }

/* Chart */
.chart { flex: 1; min-width: 0; border-left: 1px solid var(--line); display: flex; flex-direction: column; }
.frame {
  background: #000;
  color: #fff;
  padding: 3px 0 0 3px;
  box-shadow: inset 2px 0 #696969;
  font: 26px/32px "DejaVu Sans Condensed", "Noto Sans", sans-serif;
}
.plotrow { display: flex; height: 1070px; border-bottom: 1px solid #fff; }
.plot {
  flex: 1;
  min-width: 0;
  height: 1070px;
  border: 1px solid #fff;
  border-bottom: 0;
  shape-rendering: crispEdges;
}
.prices { position: relative; width: 114px; flex: none; padding: 17px 0 0 10px; overflow: hidden; }
.prices span { display: block; height: 97px; }
.prices b { position: absolute; left: 2px; right: 0; top: 257px; height: 34px; padding-left: 8px; background: #fff; color: #000; font-weight: 400; }
.times { display: flex; height: 43px; padding: 6px 0 0; overflow: hidden; font-size: 27px; }
.times span { width: 192px; flex: none; }
.chart .tabs { margin-top: 2px; height: 62px; padding-left: 8px; border-bottom: 1px solid #fff; }
.chart .tabs button { height: 60px; padding: 0 34px 4px 32px; }
.chart .tabs .sel { height: 61px; }
.chart .tabs .scroll { margin-left: auto; margin-right: 59px; padding: 0 0 8px; }
.chart .tabs .scroll::after { display: none; }
.scroll svg { width: 10px; height: 20px; }

/* Terminal */
.terminal { display: flex; padding: 13px 0 10px; border-bottom: 1px solid var(--line); box-shadow: 0 1px #fff; }
.rail { width: 43px; flex: none; display: flex; flex-direction: column; }
.rail .close { width: 34px; height: 34px; margin-bottom: 8px; }
.rail h2 {
  flex: 1;
  width: 39px;
  margin-left: 1px;
  padding: 8px 0 8px;
  line-height: 39px;
  writing-mode: vertical-rl;
  transform: rotate(180deg);
  background: linear-gradient(#bfcddb, #d7e4f2);
}
.terminal .box { flex: 1; min-width: 0; border-right: 0; }
.codebase { width: calc(100% - 39px); background: #fff; }
.codebase th { height: 60px; padding: 5px 7px 0; border-right: 1px solid #e4e4e4; }
.codebase td { height: 58px; padding: 4px 6px 0 9px; border-right: 1px solid var(--cell); border-bottom: 1px solid var(--cell); }
.codebase tr:last-child td { border-bottom: 0; height: 57px; }
.codebase th:nth-child(1) { width: 607px; }
.codebase th:nth-child(3) { width: 300px; }
.codebase th:nth-child(4) { width: 241px; }
.codebase td:first-child { padding-left: 7px; }
.codebase tbody tr:nth-child(even) { background: #ebebeb; }
.codebase td svg { display: inline-block; width: 36px; height: 36px; vertical-align: -4px; margin-right: 20px; }
.codebase td:nth-child(3) svg { margin-right: 18px; }
.codebase td:nth-child(3) { padding-left: 10px; }
.codebase th:last-child, .codebase td:last-child { text-align: right; padding-right: 12px; border-right: 0; }
.codebase td:last-child { font-size: var(--num); }
.codebase th svg { display: inline-block; width: 8px; height: 8px; vertical-align: 10px; }
.terminal .tabs button { padding-left: 29px; padding-right: 30px; }
.terminal .tabs button:first-child { padding-left: 33px; }

/* Status bar */
.status { padding-top: 3px; height: 54px; overflow: hidden; }
.line { display: flex; overflow: hidden; height: 31px; }
.line span { flex: none; width: 200px; height: 31px; padding: 12px 0 0 6px; border-left: 1px solid #b4b4b4; line-height: 40px; }
.line span:nth-child(1) { width: 1381px; padding-left: 0; border: 0; }
.line span:nth-child(2) { width: 346px; }
.line span:nth-child(3) { width: 300px; }
.line span:nth-child(8) { width: 194px; }
.line .net { display: flex; width: 380px; padding-top: 8px; padding-left: 5px; }
.net svg { width: 70px; height: 30px; margin-right: 14px; }
.first .net { line-height: 52px; }
.second { height: 20px; padding-left: 4px; }
.second span, .second .net { padding-top: 0; line-height: 20px; height: 20px; }
.second .net svg { height: 20px; }
.second span:nth-child(1) { margin-left: -4px; width: 1385px; }

/* Window edge */
.edge { position: absolute; right: 0; top: 0; width: 25px; height: 1924px; }
```

FILE: chart.js
```js
// Each bar: [high, bodyTop, bodyBottom, low, falling]
var bars = [
[643,669,672,680,0],[630,656,669,677,0],[636,650,656,663,0],[600,637,642,649,1],[640,641,654,659,1],
[637,650,654,667,0],[624,641,650,650,0],[614,630,643,660,0],[621,627,631,673,0],[585,603,627,629,0],
[601,603,684,693,1],[631,650,684,757,0],[595,649,671,699,1],[620,634,671,718,0],[623,636,758,768,1],
[696,741,758,850,0],[663,741,745,763,1],[733,744,815,849,1],[808,813,973,993,1],[877,926,969,1004,0],
[838,856,925,928,0],[766,814,856,898,0],[797,814,869,891,1],[857,868,887,921,1],[870,887,947,985,1],
[947,948,992,1044,1],[861,865,990,992,0],[834,856,865,877,0],[846,856,869,881,1],[826,852,869,872,0],
[827,830,853,861,0],[807,807,830,862,0],[773,780,807,836,0],[678,694,782,783,0],[665,694,721,728,1],
[642,665,721,743,0],[647,665,698,716,1],[666,685,698,749,0],[678,685,707,769,1],[624,663,707,729,0],
[642,663,663,679,0],[623,663,698,706,1],[678,694,698,718,0],[621,674,694,704,0],[654,674,694,699,1],
[661,694,703,725,1],[698,703,783,785,1],[701,774,783,787,0],[761,774,816,853,1],[791,806,816,831,0],
[795,806,820,826,1],[810,819,835,879,1],[788,808,836,843,0],[801,808,813,832,1],[803,814,814,849,0],
[682,696,814,829,0],[694,698,705,760,1],[608,681,705,707,0],[609,616,681,692,0],[579,608,614,643,0],
[522,580,609,637,0],[568,580,597,658,1],[554,596,623,631,1],[509,554,623,629,0],[390,390,554,578,0],
[209,221,392,404,0],[156,159,221,310,0],[51,137,160,215,0],[55,136,140,163,1],[133,138,158,194,1],
[145,157,230,253,1],[196,230,265,268,1],[264,266,269,328,1],[246,267,323,325,1],[256,263,323,337,0],
[248,265,269,300,1],[269,270,301,311,1],[286,303,334,337,1],[284,305,334,337,0],[280,299,305,312,0],
[290,292,300,337,0],[263,274,292,321,0]
];

var STEP = 32, GRID_X = 96, GRID_Y = 97, out = '';

function line(x1, y1, x2, y2, extra) {
  out += '<path d="M' + x1 + ' ' + y1 + 'L' + x2 + ' ' + y2 + '" ' + extra + '/>';
}

for (var gx = GRID_X; gx < 2670; gx += GRID_X) line(gx + 0.5, 0, gx + 0.5, 1070, 'stroke="#778899" stroke-dasharray="3 3"');
for (var gy = 31; gy < 1070; gy += GRID_Y) line(0, gy + 0.5, 2670, gy + 0.5, 'stroke="#778899" stroke-dasharray="3 3"');
line(0, 273.5, 2670, 273.5, 'stroke="#778899"');

bars.forEach(function (b, i) {
  var x = i * STEP + 0.5;
  line(x, b[0] - 1, x, b[3] - 1, 'stroke="#00ff00"');
  out += '<rect x="' + (x - 12) + '" y="' + (b[1] - 0.5) + '" width="24" height="' + (b[2] - b[1]) +
    '" stroke="#00ff00" fill="' + (b[4] ? '#fff' : '#000') + '"/>';
  if (b[1] === b[2]) line(x - 12, b[1] - 0.5, x + 13, b[1] - 0.5, 'stroke="#00ff00"');
});

document.getElementById('plot').innerHTML = out;
```
